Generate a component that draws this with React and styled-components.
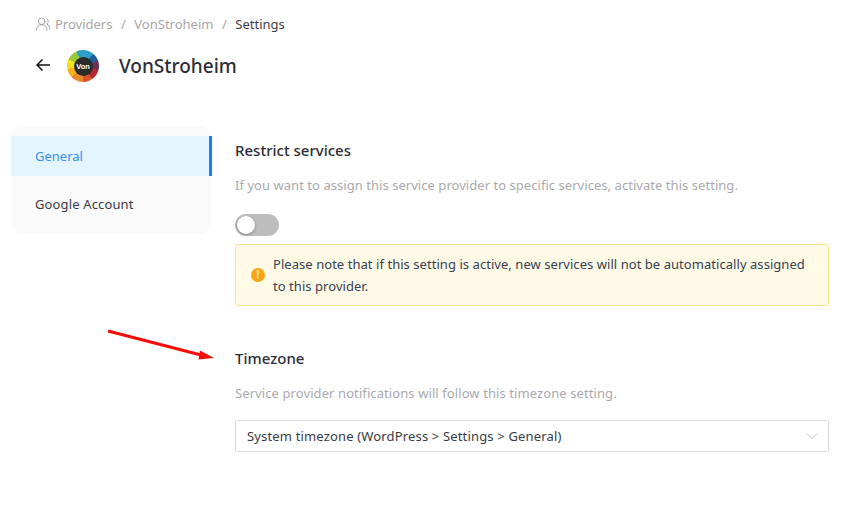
import React from 'react';
import styled, { createGlobalStyle } from 'styled-components';
import { ChevronDown, UsersRound } from 'lucide-react';

const Global = createGlobalStyle`
  html, body {
    margin: 0;
    background: #fff;
    font-family: "Noto Sans", "Open Sans", sans-serif;
    color: #354052;
  }
`;

const Page = styled.div`
  position: relative;
  width: 850px;
  height: 510px;
  overflow: hidden;
  box-sizing: border-box;
  padding-top: 15px;
`;

const Crumbs = styled.div`
  display: flex;
  align-items: center;
  height: 18px;
  padding-left: 35px;
  font-size: 13px;
  color: #a9a5a8;
`;

const Crumb = styled.span`
  margin-left: ${(p) => (p.$first ? '4px' : '0')};
  color: ${(p) => (p.$current ? '#3d3d47' : '#a9a5a8')};
`;

const Slash = styled.span`
  margin: 0 8.5px;
`;

const Header = styled.div`
  display: flex;
  align-items: center;
  height: 34px;
  margin-top: 16px;
  padding-left: 36px;
`;

const Back = styled.svg`
  display: block;
  flex: none;
  margin-top: -2px;
`;

const Logo = styled.div`
  display: flex;
  align-items: center;
  justify-content: center;
  width: 32px;
  height: 32px;
  margin-left: 17px;
  border-radius: 50%;
  background: conic-gradient(
    #2a9fc9 0 40deg, #1d5f9a 40deg 70deg, #6b3058 70deg 105deg, #b9262f 105deg 145deg,
    #d8532a 145deg 180deg, #e8892b 180deg 225deg, #f3b61f 225deg 260deg,
    #f5e11c 260deg 295deg, #9cc83c 295deg 335deg, #2a9fc9 335deg
  );
`;

const LogoCore = styled.div`
  display: flex;
  align-items: center;
  justify-content: center;
  width: 19px;
  height: 19px;
  border-radius: 50%;
  background: #2b2b2b;
  color: #fff;
  font-family: "Liberation Sans", sans-serif;
  font-size: 7.5px;
  font-weight: 700;
`;

const Title = styled.h1`
  margin: 0 0 0 20px;
  font-size: 19px;
  font-weight: 500;
  color: #2d2d38;
`;

const Body = styled.div`
  display: flex;
  align-items: flex-start;
  margin-top: 43px;
  padding-left: 11px;
`;

const Side = styled.nav`
  box-sizing: border-box;
  width: 200px;
  height: 108px;
  padding-top: 10px;
  background: #fafafa;
  border-radius: 12px;
`;

const SideItem = styled.div`
  box-sizing: border-box;
  display: flex;
  align-items: center;
  width: ${(p) => (p.$active ? '201px' : '200px')};
  height: 40px;
  margin-bottom: 8px;
  padding-left: 24px;
  font-size: 13px;
  letter-spacing: ${(p) => (p.$active ? '0' : '0.14px')};
  color: ${(p) => (p.$active ? '#3b8df0' : '#3a3a44')};
  background: ${(p) => (p.$active ? '#e3f5fe' : 'transparent')};
  border-right: ${(p) => (p.$active ? '3px solid #1a84ee' : '0')};
`;

const Content = styled.main`
  width: 594px;
  margin-left: 24px;
  padding-top: 14px;
`;

const Heading = styled.h2`
  margin: 0;
  font-size: 15px;
  line-height: 20px;
  font-weight: 500;
  color: #2d2d38;
`;

const Hint = styled.p`
  margin: 16px 0 0;
  font-size: 13px;
  line-height: 18px;
  letter-spacing: ${(p) => (p.$wide ? '0.09px' : '0.045px')};
  color: #a9a9ad;
`;

const Toggle = styled.div`
  display: flex;
  align-items: center;
  box-sizing: border-box;
  width: 44px;
  height: 22px;
  margin-top: 20px;
  padding-left: 2px;
  border-radius: 11px;
  background: #bdbdbd;
`;

const Knob = styled.div`
  width: 18px;
  height: 18px;
  border-radius: 50%;
  background: #fff;
  box-shadow: 0 1px 3px rgba(0, 0, 0, 0.3);
`;

const Notice = styled.div`
  box-sizing: border-box;
  display: flex;
  align-items: center;
  height: 62px;
  margin-top: 8px;
  padding: 0 16px 0 15px;
  background: #fffae6;
  border: 1px solid #fde48c;
  border-radius: 3px;
  font-size: 13px;
  line-height: 22px;
  letter-spacing: 0.05px;
  color: #354052;
`;

const NoticeIcon = styled.div`
  flex: none;
  display: flex;
  align-items: center;
  justify-content: center;
  width: 14px;
  height: 14px;
  margin-right: 8px;
  border-radius: 50%;
  background: #faa61a;
  color: #fff;
  font-family: "Liberation Sans", sans-serif;
  font-size: 10px;
  font-weight: 700;
`;

const Section = styled.section`
  margin-top: 42px;
`;

const Select = styled.div`
  box-sizing: border-box;
  display: flex;
  align-items: center;
  justify-content: space-between;
  height: 32px;
  margin-top: 18px;
  padding: 0 6px 0 11px;
  border: 1px solid #d9d9d9;
  border-radius: 2px;
  font-size: 13px;
  letter-spacing: 0.16px;
  color: #3a3a44;
`;

const Chevron = styled(ChevronDown)`
  color: #bfbfbf;
`;

const Annotation = styled.svg`
  position: absolute;
  left: 100px;
  top: 325px;
`;

export default function App() {
  return (
    <Page>
      <Global />
      <Crumbs>
        <UsersRound size={16} strokeWidth={1.2} color="#8f8f8f" />
        <Crumb $first>Providers</Crumb>
        <Slash>/</Slash>
        <Crumb>VonStroheim</Crumb>
        <Slash>/</Slash>
        <Crumb $current>Settings</Crumb>
      </Crumbs>
      <Header>
        <Back width="14" height="12" viewBox="0 0 14 12" fill="none" stroke="#111" strokeWidth="1.5">
          <path d="M14 6H1M6.5 .5 1 6l5.5 5.5" />
        </Back>
        <Logo>
          <LogoCore>Von</LogoCore>
        </Logo>
        <Title>VonStroheim</Title>
      </Header>
      <Body>
        <Side>
          <SideItem $active>General</SideItem>
          <SideItem>Google Account</SideItem>
        </Side>
        <Content>
          <Heading>Restrict services</Heading>
          <Hint>If you want to assign this service provider to specific services, activate this setting.</Hint>
          <Toggle>
            <Knob />
          </Toggle>
          <Notice>
            <NoticeIcon>!</NoticeIcon>
            <div>Please note that if this setting is active, new services will not be automatically assigned to this provider.</div>
          </Notice>
          <Section>
            <Heading>Timezone</Heading>
            <Hint $wide>Service provider notifications will follow this timezone setting.</Hint>
            <Select>
              <span>{'System timezone (WordPress > Settings > General)'}</span>
              <Chevron size={20} strokeWidth={1} />
            </Select>
          </Section>
        </Content>
      </Body>
      <Annotation width="120" height="40" viewBox="0 0 120 40">
        <line x1="8" y1="6" x2="101" y2="30" stroke="#fb0c0c" strokeWidth="3" />
        <polygon points="114,33 100,25.5 98.5,34.5" fill="#fb0c0c" />
      </Annotation>
    </Page>
  );
}
